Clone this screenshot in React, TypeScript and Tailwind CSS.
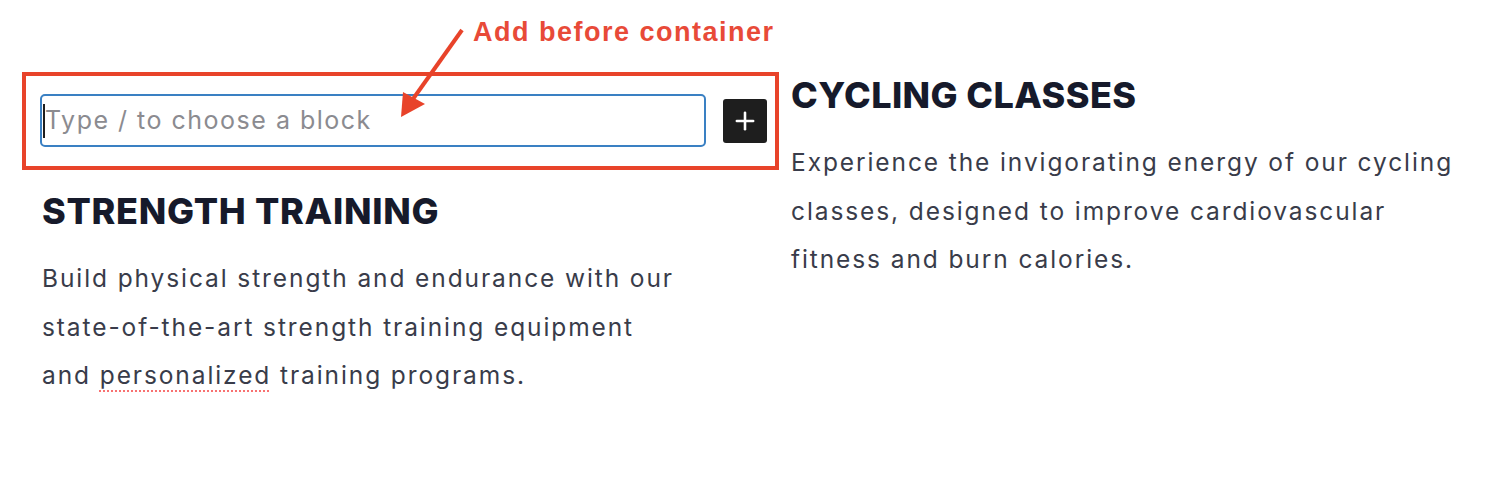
import { Plus } from "lucide-react";

function Annotation() {
  return (
    <>
      {/* red frame round the inserter */}
      <div className="pointer-events-none absolute left-[-18px] top-[-22px] h-[98px] w-[757px] border-4 border-[#e8432a]" />
      <svg
        className="pointer-events-none absolute left-[-40px] top-[-94px]"
        width="800"
        height="140"
        viewBox="0 0 800 140"
      >
        <line x1="462" y1="30" x2="413" y2="99" stroke="#e8432a" strokeWidth="4" />
        <polygon points="401,117 403,92 425,104" fill="#e8432a" />
      </svg>
      <p
        className="absolute left-[433px] top-[-75px] whitespace-nowrap text-[27px] font-bold leading-none tracking-[1.5px] text-[#e84a38]"
        style={{ fontFamily: '"Liberation Sans", Arial, sans-serif' }}
      >
        Add before container
      </p>
    </>
  );
}

export default function App() {
  const body = { fontFamily: 'Inter, "Open Sans", sans-serif' };

  return (
    <div className="h-[482px] w-full bg-white pl-[40px] pt-[73px]" style={body}>
      <div className="flex gap-[24px]">
        {/* Left column */}
        <div className="w-[727px] shrink-0 pt-[21px]">
          <div className="relative flex items-center gap-[17px]">
            <Annotation />
            <div className="flex h-[53px] w-[667px] items-center rounded-[5px] border-2 border-[#3a80c3] pl-[1px]">
              <span className="h-[34px] w-[2px] bg-[#1e1e1e]" />
              <span className="text-[25px] tracking-[1.5px] text-[#8b8b90]">Type / to choose a block</span>
            </div>
            <button className="flex h-[44px] w-[44px] items-center justify-center rounded-[3px] bg-[#1e1e1e] text-white">
              <Plus size={28} strokeWidth={2.2} />
            </button>
          </div>

          <div className="pl-[2px]">
            <h2 className="mt-[42px] text-[36px] font-extrabold leading-[44px] tracking-[0.7px] text-[#161a2b]">
              STRENGTH TRAINING
            </h2>
            <p className="mt-[21px] text-[24.5px] leading-[48.5px] tracking-[1.9px] text-[#393c4a]">
              Build physical strength and endurance with our
              <br />
              state-of-the-art strength training equipment
              <br />
              and{" "}
              <span className="underline decoration-[#f87171] decoration-dotted decoration-2 underline-offset-[6px]">
                personalized
              </span>{" "}
              training programs.
            </p>
          </div>
        </div>

        {/* Right column */}
        <div className="w-[680px]">
          <h2 className="text-[36px] font-extrabold leading-[44px] tracking-[0.4px] text-[#161a2b]">CYCLING CLASSES</h2>
          <p className="mt-[21px] text-[24.5px] leading-[48.5px] tracking-[1.9px] text-[#393c4a]">
            Experience the invigorating energy of our cycling
            <br />
            classes, designed to improve cardiovascular
            <br />
            fitness and burn calories.
          </p>
        </div>
      </div>
    </div>
  );
}
